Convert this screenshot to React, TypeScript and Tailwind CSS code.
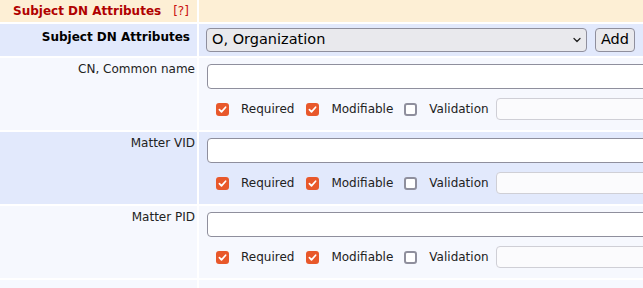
import React from 'react';

const Box = ({ checked }: { checked: boolean }) =>
  checked ? (
    <span className="w-[13px] h-[13px] rounded-[3px] bg-[#e8582b] flex items-center justify-center shrink-0">
      <svg width="13" height="13" viewBox="0 0 13 13">
        <path d="M3.4 6.7 L5.5 8.9 L9.6 4.2" fill="none" stroke="#fff" strokeWidth="1.7" strokeLinecap="round" strokeLinejoin="round" />
      </svg>
    </span>
  ) : (
    <span className="block w-[13px] h-[13px] rounded-[3px] border-2 border-[#8f8f9d] bg-white shrink-0" />
  );

const AttrRow = ({ label, bg }: { label: string; bg: string }) => (
  <>
    <div className={`${bg} h-[72px] text-right pr-[2px] pt-[4px] leading-[14px]`}>{label}</div>
    <div className={`${bg} h-[72px] pl-[8px] pt-[6px]`}>
      <input type="text" className="block w-[480px] h-[25px] border border-[#8f8f9d] rounded-[4px] bg-white outline-none" />
      <div className="flex items-center mt-[9px] h-[22px] pl-[9px]">
        <Box checked />
        <span className="ml-[12px]">Required</span>
        <span className="ml-[12px]"><Box checked /></span>
        <span className="ml-[12px]">Modifiable</span>
        <span className="ml-[11px]"><Box checked={false} /></span>
        <span className="ml-[12px]">Validation</span>
        <input type="text" disabled className="ml-[7px] w-[200px] h-[22px] border border-[#cfcfd6] rounded-[4px] bg-[#fbfbfd]" />
      </div>
    </div>
  </>
);

export default function App() {
  return (
    <div className="w-[643px] h-[288px] overflow-hidden bg-white font-['DejaVu_Sans',sans-serif] text-[12px] text-[#222]">
      <div className="grid grid-cols-[197px_600px] gap-[2px] w-[800px]">
        {/* header */}
        <div className="bg-[#fdefd5] h-[22px] flex items-center pl-[13px]">
          <span className="font-bold text-[#b00000]">Subject DN Attributes</span>
          <span className="ml-[12px] text-[#c81010]">[?]</span>
        </div>
        <div className="bg-[#fdefd5] h-[22px]" />

        {/* attribute picker */}
        <div className="bg-[#e2e9fc] h-[32px] text-right pr-[7px] pt-[6px] leading-[14px] font-bold text-black">
          Subject DN Attributes
        </div>
        <div className="bg-[#e2e9fc] h-[32px] pl-[7px] pt-[4px] flex items-start text-[14.5px] text-black">
          <div className="w-[381px] h-[24px] flex items-center justify-between pl-[5px] pr-[5px] bg-[#e9e9ed] border border-[#8f8f9d] rounded-[4px]">
            <span>O, Organization</span>
            <svg width="8" height="6" viewBox="0 0 8 6">
              <path d="M1 1.5 L4 4.5 L7 1.5" fill="none" stroke="#222" strokeWidth="1.3" strokeLinecap="round" strokeLinejoin="round" />
            </svg>
          </div>
          <button className="ml-[8px] w-[40px] h-[24px] bg-[#e9e9ed] border border-[#8f8f9d] rounded-[4px] flex items-center justify-center">
            Add
          </button>
        </div>

        <AttrRow label="CN, Common name" bg="bg-[#f6f8fe]" />
        <AttrRow label="Matter VID" bg="bg-[#e2e9fc]" />
        <AttrRow label="Matter PID" bg="bg-[#f6f8fe]" />

        <div className="bg-[#f6f8fe] h-[40px]" />
        <div className="bg-[#f6f8fe] h-[40px]" />
      </div>
    </div>
  );
}
